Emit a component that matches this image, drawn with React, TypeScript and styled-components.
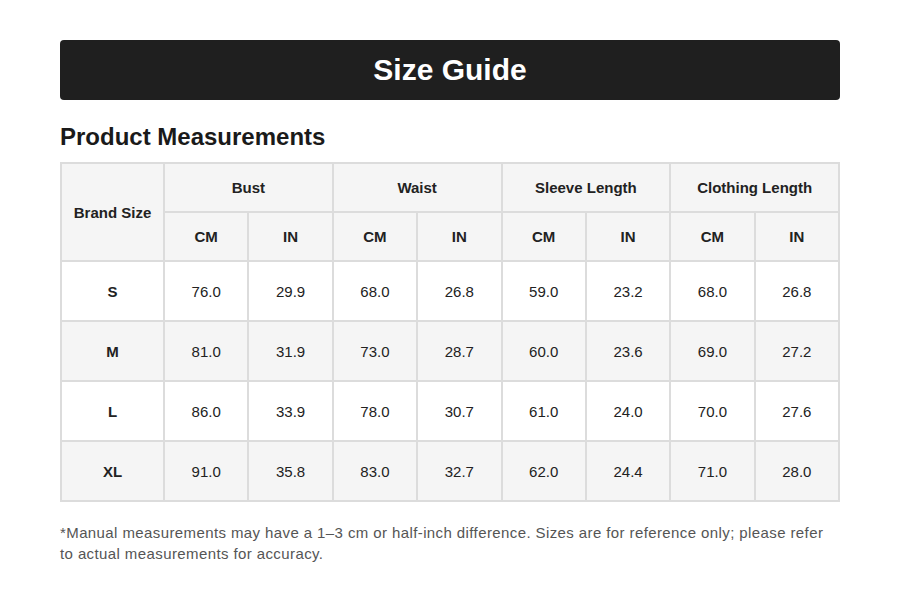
import React from "react";
import styled, { createGlobalStyle } from "styled-components";

const GlobalStyle = createGlobalStyle`
  body {
    margin: 0;
    background: #fff;
    font-family: "Liberation Sans", Arial, sans-serif;
    color: #222;
  }
`;

const Page = styled.div`
  width: 780px;
  padding: 40px 60px 0;
`;

const Banner = styled.div`
  height: 60px;
  border-radius: 4px;
  background: #1f1f1f;
  display: flex;
  align-items: center;
  justify-content: center;
`;

const BannerTitle = styled.h1`
  margin: 0;
  color: #fff;
  font-size: 30px;
  font-weight: 700;
`;

const SectionTitle = styled.h2`
  margin: 22px 0 10px;
  font-size: 24px;
  font-weight: 700;
  line-height: 30px;
  color: #1a1a1a;
`;

const Table = styled.table`
  width: 780px;
  border-collapse: collapse;
  table-layout: fixed;
  border: 2px solid #dcdcdc;
`;

const Head = styled.th`
  height: 47px;
  padding: 0;
  border: 2px solid #dcdcdc;
  background: #f5f5f5;
  font-size: 15px;
  font-weight: 700;
  color: #222;
  text-align: center;
`;

const Row = styled.tr<{ $shade: boolean }>`
  background: ${(p) => (p.$shade ? "#f5f5f5" : "#fff")};
`;

const Cell = styled.td<{ $bold?: boolean }>`
  height: 58px;
  padding: 0;
  border: 2px solid #dcdcdc;
  font-size: 15px;
  font-weight: ${(p) => (p.$bold ? 700 : 400)};
  color: #222;
  text-align: center;
`;

const Note = styled.p`
  margin: 20px 0 0;
  max-width: 772px;
  font-size: 15px;
  line-height: 21px;
  letter-spacing: 0.4px;
  color: #555;
`;

const groups = ["Bust", "Waist", "Sleeve Length", "Clothing Length"];

const rows: [string, string[]][] = [
  ["S", ["76.0", "29.9", "68.0", "26.8", "59.0", "23.2", "68.0", "26.8"]],
  ["M", ["81.0", "31.9", "73.0", "28.7", "60.0", "23.6", "69.0", "27.2"]],
  ["L", ["86.0", "33.9", "78.0", "30.7", "61.0", "24.0", "70.0", "27.6"]],
  ["XL", ["91.0", "35.8", "83.0", "32.7", "62.0", "24.4", "71.0", "28.0"]],
];

export default function App() {
  return (
    <Page>
      <GlobalStyle />
      <Banner>
        <BannerTitle>Size Guide</BannerTitle>
      </Banner>
      <SectionTitle>Product Measurements</SectionTitle>
      <Table>
        <colgroup>
          <col style={{ width: 103 }} />
          {Array.from({ length: 8 }).map((_, i) => (
            <col key={i} />
          ))}
        </colgroup>
        <thead>
          <tr>
            <Head rowSpan={2}>Brand Size</Head>
            {groups.map((g) => (
              <Head key={g} colSpan={2}>
                {g}
              </Head>
            ))}
          </tr>
          <tr>
            {groups.map((g) => (
              <React.Fragment key={g}>
                <Head>CM</Head>
                <Head>IN</Head>
              </React.Fragment>
            ))}
          </tr>
        </thead>
        <tbody>
          {rows.map(([size, vals], i) => (
            <Row key={size} $shade={i % 2 === 1}>
              <Cell $bold>{size}</Cell>
              {vals.map((v, j) => (
                <Cell key={j}>{v}</Cell>
              ))}
            </Row>
          ))}
        </tbody>
      </Table>
      <Note>
        *Manual measurements may have a 1–3 cm or half-inch difference. Sizes are for reference only; please refer
        to actual measurements for accuracy.
      </Note>
    </Page>
  );
}
